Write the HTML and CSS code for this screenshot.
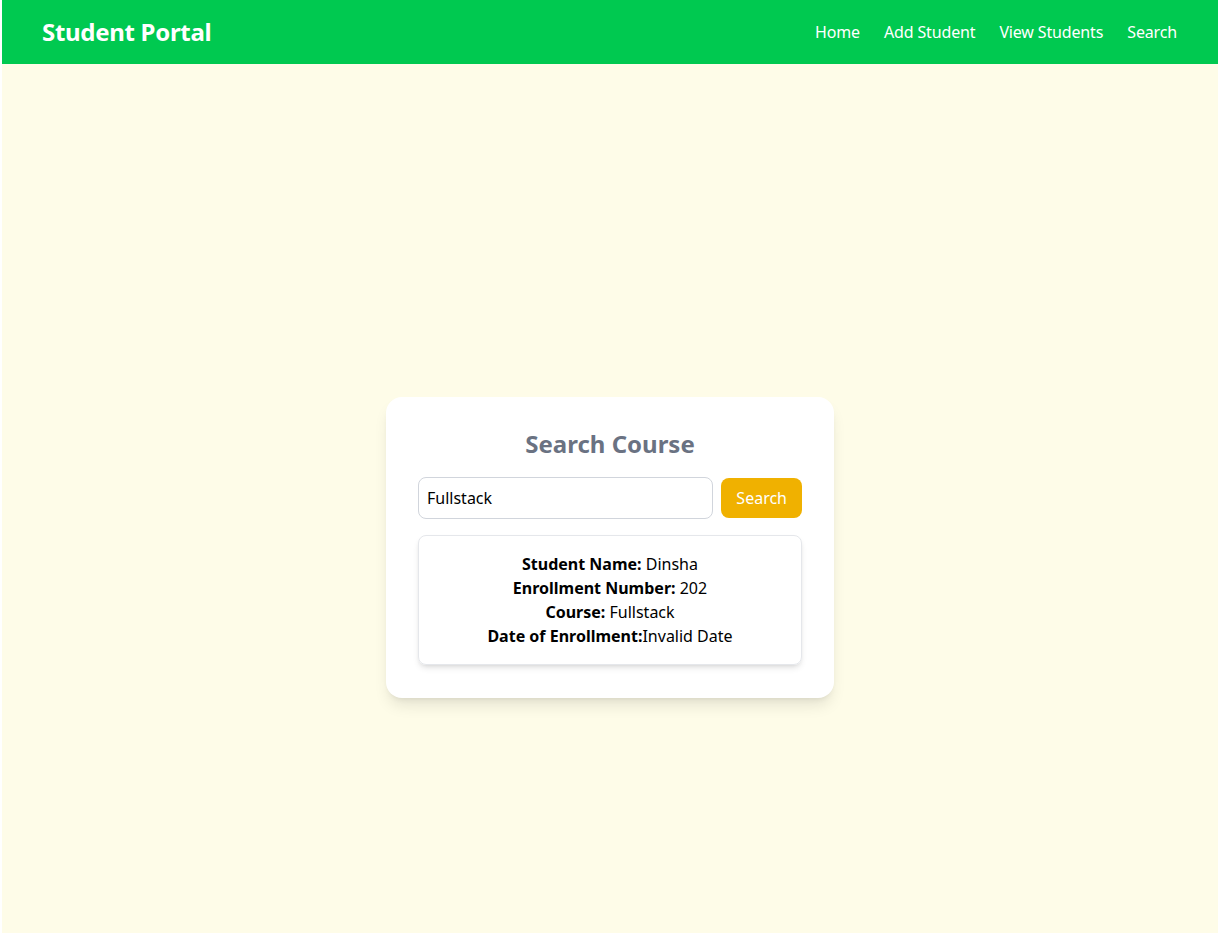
FILE: index.html
```html
<!DOCTYPE html>
<html lang="en">
<head>
<meta charset="utf-8">
<title>Student Portal</title>
<link rel="stylesheet" href="styles.css">
</head>
<body>
<div class="page">
  <nav class="navbar">
    <div class="brand">Student Portal</div>
    <ul class="links">
      <li><a href="#">Home</a></li>
      <li><a href="#">Add Student</a></li>
      <li><a href="#">View Students</a></li>
      <li><a href="#">Search</a></li>
    </ul>
  </nav>
  <main class="main">
    <section class="card">
      <h2 class="title">Search Course</h2>
      <form class="search-row">
        <input class="search-input" type="text" value="Fullstack">
        <button class="search-btn" type="button">Search</button>
      </form>
      <div class="result">
        <p><strong>Student Name:</strong> Dinsha</p>
        <p><strong>Enrollment Number:</strong> 202</p>
        <p><strong>Course:</strong> Fullstack</p>
        <p><strong>Date of Enrollment:</strong>Invalid Date</p>
      </div>
    </section>
  </main>
</div>
</body>
</html>
```

FILE: styles.css
```css
* { box-sizing: border-box; }
html, body { margin: 0; padding: 0; background: #ffffff; }
body {
  font-family: "Noto Sans", "Open Sans", sans-serif;
  font-size: 16px;
  line-height: 24px;
  color: #000;
}
.page {
  margin: 0 2px;
  background: #fefce8;
  min-height: 100vh;
}
.navbar {
  height: 64px;
  background: #00c950;
  display: flex;
  align-items: center;
  justify-content: space-between;
  padding: 0 41px 0 40px;
}
.brand {
  color: #fff;
  font-weight: 700;
  font-size: 24px;
  line-height: 32px;
  letter-spacing: -0.3px;
}
.links {
  list-style: none;
  margin: 0;
  padding: 0;
  display: flex;
  gap: 24px;
}
.links a {
  color: #fff;
  text-decoration: none;
  font-size: 16px;
  letter-spacing: -0.15px;
}
.main {
  display: flex;
  justify-content: center;
  padding-top: 333px;
}
.card {
  width: 448px;
  background: #fff;
  border-radius: 16px;
  padding: 31px 32px 33px;
  box-shadow: 0 10px 15px -3px rgba(0,0,0,0.1), 0 4px 6px -4px rgba(0,0,0,0.1);
}
.title {
  margin: 0 0 17px;
  text-align: center;
  color: #6a7282;
  font-size: 24px;
  line-height: 32px;
  font-weight: 700;
}
.search-row {
  display: flex;
  gap: 8px;
  align-items: center;
  margin: 0 0 16px;
}
.search-input {
  flex: 1;
  height: 42px;
  border: 1px solid #d1d5dc;
  border-radius: 8px;
  padding: 0 8px;
  font: inherit;
  color: #000;
  background: #fff;
}
.search-btn {
  height: 40px;
  padding: 0 15px;
  border: none;
  border-radius: 8px;
  background: #f0b100;
  color: #fff;
  font: inherit;
}
.result {
  border: 1px solid #e5e7eb;
  border-radius: 8px;
  padding: 16px;
  text-align: center;
  box-shadow: 0 4px 6px -1px rgba(0,0,0,0.1), 0 2px 4px -2px rgba(0,0,0,0.1);
}
.result p { margin: 0; }
```
